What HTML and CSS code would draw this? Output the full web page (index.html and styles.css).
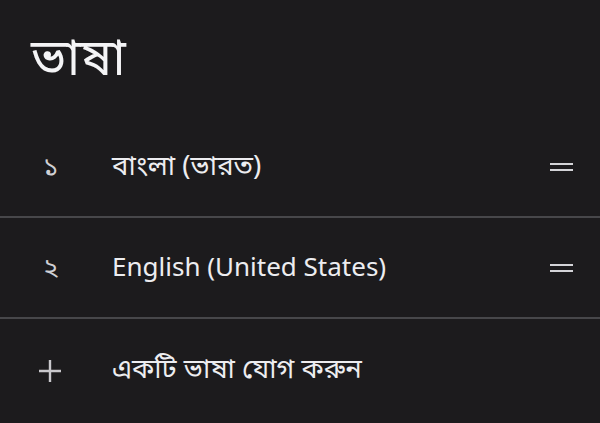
FILE: index.html
```html
<!DOCTYPE html>
<html lang="bn">
<head>
  <meta charset="UTF-8" />
  <meta name="viewport" content="width=device-width, initial-scale=1.0"/>
  <title>ভাষা</title>
  <link rel="stylesheet" href="styles.css">
</head>
<body>

  <div class="lang-page">
    <h1 class="page-title">ভাষা</h1>

    <ul class="lang-list">
      <li class="lang-row">
        <span class="lang-index">১</span>
        <span class="lang-name">বাংলা (ভারত)</span>
        <span class="drag-handle"></span>
      </li>
      <li class="lang-row">
        <span class="lang-index">২</span>
        <span class="lang-name latin">English (United States)</span>
        <span class="drag-handle"></span>
      </li>
      <li class="lang-row add-row">
        <span class="lang-index">
          <svg width="26" height="26" viewBox="0 0 26 26">
            <path d="M13 2v22M2 13h22" stroke="#c9c8cc" stroke-width="2.4" fill="none"/>
          </svg>
        </span>
        <span class="lang-name">একটি ভাষা যোগ করুন</span>
      </li>
    </ul>
  </div>

</body>
</html>
```

FILE: styles.css
```css
* {
  box-sizing: border-box;
  margin: 0;
  padding: 0;
}

body {
  background: #1c1b1d;
  color: #ededf0;
  font-family: 'Noto Sans Bengali', 'Noto Sans', Roboto, sans-serif;
  width: 600px;
  height: 423px;
  overflow: hidden;
}

.page-title {
  font-size: 51px;
  font-weight: 400;
  height: 117px;
  line-height: 117px;
  padding-top: 4px;
  padding-left: 31px;
  color: #f4f4f6;
}

.lang-list {
  list-style: none;
}

.lang-row {
  display: flex;
  align-items: center;
  height: 101px;
  padding-top: 3px;
  border-bottom: 2px solid #47474a;
}

.add-row {
  border-bottom: none;
}

.lang-index {
  width: 112px;
  padding-left: 43px;
  font-size: 26px;
  color: #d0d0d4;
  display: flex;
  align-items: center;
}

.add-row .lang-index {
  padding-left: 37px;
}

.lang-name {
  flex: 1;
  font-size: 27.5px;
  color: #ededf0;
}

.lang-name.latin {
  font-size: 26px;
}

.drag-handle {
  width: 23px;
  height: 8px;
  margin-right: 27px;
  margin-top: -3px;
  border-top: 2.5px solid #d4d4d8;
  border-bottom: 2.5px solid #d4d4d8;
}
```
